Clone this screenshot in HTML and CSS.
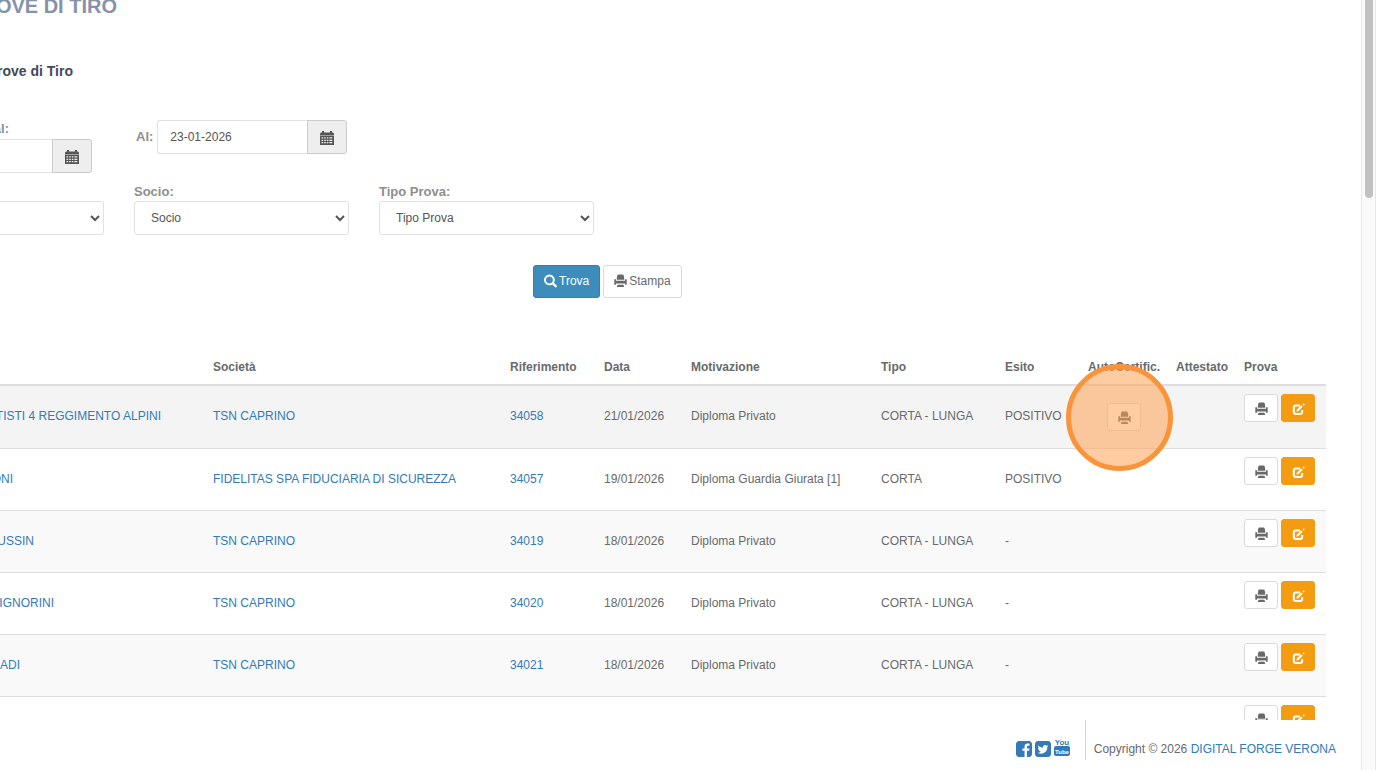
FILE: index.html
```html
<!DOCTYPE html>
<html lang="it">
<head>
<meta charset="utf-8">
<title>Prove di Tiro</title>
<link rel="stylesheet" href="styles.css">
</head>
<body>
<svg class="sprite" aria-hidden="true">
  <symbol id="i-print" viewBox="0 0 13 14"><path d="M4.500.5h4q1 0 1.200 1L10.200 4v1.800H2.800V4L3.300 1.500Q3.500.5 4.500.5zM.3 5.300h1.700v1.400h9V5.300h1.700v5.400H11V9.500H2v1.200H.3zM3.600 10.700h5.800l.8 2.300H2.800z"/></symbol>
  <symbol id="i-edit" viewBox="0 0 13 13"><path d="M8 3H4Q1.800 3 1.800 5.200v4q0 2.200 2.200 2.200h4q2.200 0 2.200-2.200V7.600" fill="none" stroke="currentColor" stroke-width="2"/><path d="M4.800 7.200L9.200 2.800l1.500 1.500L6.300 8.700 4.400 9.100zM10.600 1.800l1-1 1.200 1.200-1 1z"/></symbol>
  <symbol id="i-search" viewBox="0 0 1200 1200"><path transform="translate(0 1200) scale(1 -1)" d="M500 1191q100 0 191 -39t156.500 -104.500t104.500 -156.500t39 -191l-1 -2l1 -5q0 -141 -78 -262l275 -274q23 -26 22.500 -44.500t-22.500 -42.500l-59 -58q-26 -20 -46.500 -20t-39.500 20l-275 274q-119 -77 -261 -77l-5 1l-2 -1q-100 0 -191 39t-156.500 104.500t-104.500 156.500t-39 191t39 191t104.500 156.500t156.500 104.500t191 39zM500 1022q-88 0 -162 -43t-117 -117t-43 -162t43 -162t117 -117t162 -43t162 43t117 117t43 162t-43 162t-117 117t-162 43z"/></symbol>
  <symbol id="i-cal" viewBox="0 0 14 14"><path d="M0 3q0-1.500 1.500-1.500H2V0h2v1.500h6V0h2v1.500h.5Q14 1.500 14 3v1H0z"/><path fill-rule="evenodd" d="M0 4.600h14V14H0zM1.500 6.300v1.200h1.700V6.300zM4.200 6.300v1.200h1.600V6.300zM6.800 6.300v1.200h1.600V6.300zM9.400 6.300v1.200h2.900V6.300zM1.500 8.700v1.200h1.700V8.700zM4.200 8.700v1.200h1.600V8.700zM6.800 8.700v1.200h1.600V8.700zM9.400 8.700v1.200h2.900V8.700zM1.500 11v1.200h1.700V11zM4.200 11v1.200h1.600V11zM6.800 11v1.200h1.600V11zM9.400 11v1.200h2.900V11z"/></symbol>
</svg>

<div class="frame">
  <div class="page">
    <main class="content">
      <h1 class="title"><span>PROVE DI TIRO</span></h1>
      <h2 class="subtitle"><span>Prove di Tiro</span></h2>

      <form class="filters">
        <div class="dates">
          <div class="from">
            <label for="dal"><span>Dal:</span></label>
            <div class="group"><input id="dal" type="text"><button type="button" aria-label="Calendario dal"><svg><use href="#i-cal"/></svg></button></div>
          </div>
          <div class="to">
            <label for="al">Al:</label>
            <div class="group"><input id="al" type="text" value="23-01-2026"><button type="button" aria-label="Calendario al"><svg><use href="#i-cal"/></svg></button></div>
          </div>
        </div>
        <div class="selects">
          <div class="field first"><select aria-label="Filtro"><option></option></select></div>
          <div class="field"><label for="socio">Socio:</label><select id="socio"><option>Socio</option></select></div>
          <div class="field"><label for="tipo">Tipo Prova:</label><select id="tipo"><option>Tipo Prova</option></select></div>
        </div>
        <div class="actions">
          <button type="button" class="btn primary"><svg><use href="#i-search"/></svg>Trova</button>
          <button type="button" class="btn"><svg><use href="#i-print"/></svg>Stampa</button>
        </div>
      </form>

      <table class="grid">
        <colgroup><col class="c-name"><col><col class="c-ref"><col class="c-date"><col class="c-reason"><col class="c-type"><col class="c-result"><col class="c-auto"><col class="c-att"><col class="c-test"></colgroup>
        <thead><tr><th></th><th>Società</th><th>Riferimento</th><th>Data</th><th>Motivazione</th><th>Tipo</th><th>Esito</th><th>AutoCertific.</th><th>Attestato</th><th>Prova</th></tr></thead>
        <tbody>
          <tr class="hover"><td class="name"><a href="#" style="width:161px">TISTI 4 REGGIMENTO ALPINI</a></td><td><a href="#">TSN CAPRINO</a></td><td><a href="#">34058</a></td><td>21/01/2026</td><td>Diploma Privato</td><td>CORTA - LUNGA</td><td>POSITIVO</td><td class="auto"><span class="spot"><button type="button" class="icon-btn" aria-label="Stampa autocertificazione"><svg><use href="#i-print"/></svg></button></span></td><td></td><td class="tools"><button type="button" class="icon-btn" aria-label="Stampa"><svg><use href="#i-print"/></svg></button><button type="button" class="icon-btn edit" aria-label="Modifica"><svg><use href="#i-edit"/></svg></button></td></tr>
          <tr><td class="name"><a href="#" style="width:13px">ONI</a></td><td><a href="#">FIDELITAS SPA FIDUCIARIA DI SICUREZZA</a></td><td><a href="#">34057</a></td><td>19/01/2026</td><td>Diploma Guardia Giurata [1]</td><td>CORTA</td><td>POSITIVO</td><td></td><td></td><td class="tools"><button type="button" class="icon-btn" aria-label="Stampa"><svg><use href="#i-print"/></svg></button><button type="button" class="icon-btn edit" aria-label="Modifica"><svg><use href="#i-edit"/></svg></button></td></tr>
          <tr><td class="name"><a href="#" style="width:34px">USSIN</a></td><td><a href="#">TSN CAPRINO</a></td><td><a href="#">34019</a></td><td>18/01/2026</td><td>Diploma Privato</td><td>CORTA - LUNGA</td><td>-</td><td></td><td></td><td class="tools"><button type="button" class="icon-btn" aria-label="Stampa"><svg><use href="#i-print"/></svg></button><button type="button" class="icon-btn edit" aria-label="Modifica"><svg><use href="#i-edit"/></svg></button></td></tr>
          <tr><td class="name"><a href="#" style="width:54px">IGNORINI</a></td><td><a href="#">TSN CAPRINO</a></td><td><a href="#">34020</a></td><td>18/01/2026</td><td>Diploma Privato</td><td>CORTA - LUNGA</td><td>-</td><td></td><td></td><td class="tools"><button type="button" class="icon-btn" aria-label="Stampa"><svg><use href="#i-print"/></svg></button><button type="button" class="icon-btn edit" aria-label="Modifica"><svg><use href="#i-edit"/></svg></button></td></tr>
          <tr><td class="name"><a href="#" style="width:20px">ADI</a></td><td><a href="#">TSN CAPRINO</a></td><td><a href="#">34021</a></td><td>18/01/2026</td><td>Diploma Privato</td><td>CORTA - LUNGA</td><td>-</td><td></td><td></td><td class="tools"><button type="button" class="icon-btn" aria-label="Stampa"><svg><use href="#i-print"/></svg></button><button type="button" class="icon-btn edit" aria-label="Modifica"><svg><use href="#i-edit"/></svg></button></td></tr>
          <tr class="last"><td></td><td></td><td></td><td></td><td></td><td></td><td></td><td></td><td></td><td class="tools"><button type="button" class="icon-btn" aria-label="Stampa"><svg><use href="#i-print"/></svg></button><button type="button" class="icon-btn edit" aria-label="Modifica"><svg><use href="#i-edit"/></svg></button></td></tr>
        </tbody>
      </table>
    </main>
    <footer class="footer">
      <nav class="social">
        <a href="#" aria-label="Facebook"><svg viewBox="0 128 1536 1536"><path d="M1248 128q119 0 203.500 84.500t84.500 203.500v960q0 119-84.500 203.500t-203.500 84.500h-188v-595h199l30-232h-229v-148q0-56 23.500-84t91.500-28l122-1v-207q-63-9-178-9-136 0-217.500 80t-81.500 226v171h-200v232h200v595h-532q-119 0-203.500-84.500t-84.500-203.500v-960q0-119 84.500-203.500t203.500-84.500h960z"/></svg></a>
        <a href="#" aria-label="Twitter"><svg viewBox="128 128 1536 1536"><path d="M1408 610q-56 25-121 34 68-40 93-117-65 38-134 51-61-66-153-66-87 0-148.500 61.500t-61.500 148.500q0 29 5 48-129-7-242-65t-192-155q-29 50-29 106 0 114 91 175-47-1-100-26v2q0 75 50 133.500t123 72.500q-29 8-51 8-13 0-39-4 21 63 74.500 104t121.500 42q-116 90-261 90-26 0-50-3 148 94 322 94 112 0 210-35.500t168-95 120.500-137 75-162 24.500-168.500q0-18-1-27 63-45 105-109zm256-194v960q0 119-84.500 203.500t-203.500 84.500h-960q-119 0-203.500-84.500t-84.500-203.500v-960q0-119 84.500-203.500t203.500-84.500h960q119 0 203.500 84.500t84.500 203.500z"/></svg></a>
        <a href="#" aria-label="YouTube"><svg class="yt" viewBox="0 0 16 19"><text x="8" y="7" class="yt-you">You</text><rect x="0" y="8" width="16" height="10" rx="2"/><text x="8" y="16" class="yt-tube">Tube</text></svg></a>
      </nav>
      <p class="copy">Copyright © 2026 <a href="#">DIGITAL FORGE VERONA</a></p>
    </footer>
  </div>
  <div class="scrollbar" aria-hidden="true"><div class="thumb"></div></div>
</div>
</body>
</html>
```
FILE: styles.css
```css
*, *::after { box-sizing: border-box; }
body {
  margin: 0;
  font: 12px/17px "Liberation Sans", Arial, sans-serif;
  color: #676a6c;
  background: #fff;
  overflow: hidden;
}
.sprite { position: absolute; width: 0; height: 0; }
svg { fill: currentColor; display: block; }
a { color: #337ab7; text-decoration: none; }
input, select, button { font: inherit; color: inherit; }
.frame { display: flex; height: 100vh; }
.page { flex: 1; min-width: 0; display: flex; flex-direction: column; }
.content { flex: 1; min-height: 0; overflow: hidden; padding-right: 35px; }

.title, .subtitle { display: flex; justify-content: flex-end; margin: 0; overflow: hidden; white-space: nowrap; }
.title { width: 117px; height: 18px; align-items: flex-end; font-size: 20px; line-height: 24px; color: #8592a9; }
.subtitle { width: 73px; margin-top: 43px; font-size: 14px; line-height: 20px; color: #3f4a5a; }

label { font-size: 13px; line-height: 18px; font-weight: bold; color: #8e8e8e; }
.dates { display: flex; margin-top: 39px; }
.from { width: 92px; overflow: hidden; }
.from label { display: flex; justify-content: flex-end; width: 9px; height: 19px; white-space: nowrap; }
.to { display: flex; align-items: center; gap: 4px; height: 34px; margin-left: 44px; }
.group { display: flex; height: 34px; }
.group input { width: 150px; min-width: 0; border: 1px solid #e0e1e4; border-right: 0; border-radius: 3px 0 0 3px; padding: 0 12px; background: #fff; color: #555; }
.from input { width: 52px; border-left: 0; border-radius: 0; }
.group button { width: 40px; border: 1px solid #ccc; border-radius: 0 3px 3px 0; background: #eee; display: flex; align-items: center; justify-content: center; padding: 2px 0 0; color: #555; }
.group svg { width: 14px; height: 14px; }

.selects { display: flex; align-items: flex-end; gap: 30px; margin-top: 10px; }
.field { width: 215px; display: flex; flex-direction: column; }
.field.first { width: 104px; }
select { width: 100%; height: 34px; border: 1px solid #e0e1e4; border-radius: 3px; background: #fff; padding: 0 12px; color: #555; }
.field.first select { border-left: 0; border-radius: 0 3px 3px 0; }
.selects select { padding-right: 0; }
.actions { display: flex; gap: 3px; margin: 30px 0 0 533px; }
.btn { display: flex; align-items: center; gap: 2px; height: 33px; padding: 0 10px; border: 1px solid #d9dadc; border-radius: 3px; background: #fff; }
.btn svg { width: 13px; height: 14px; margin-bottom: 2px; }
.btn.primary { background: #3c8dbc; border-color: #367fa9; color: #fff; }

.grid { width: 100%; margin-top: 51px; table-layout: fixed; border-collapse: separate; border-spacing: 0; }
.c-name { width: 205px; }
.c-ref { width: 94px; }
.c-date { width: 87px; }
.c-reason { width: 190px; }
.c-type { width: 124px; }
.c-result { width: 83px; }
.c-auto { width: 88px; }
.c-att { width: 68px; }
.c-test { width: 90px; }
th { height: 37px; padding: 2px 8px 0; text-align: left; white-space: nowrap; border-bottom: 2px solid #ddd; }
td { height: 62px; padding: 0 8px; white-space: nowrap; border-bottom: 1px solid #ddd; }
tbody tr:nth-child(odd) { background: #f9f9f9; }
tbody tr.hover { background: #f4f4f4; }
tbody tr.hover td { height: 63px; }
tbody tr.hover td:not(.auto) { padding-bottom: 2px; }
tbody tr.last { background: #fff; }
td.name { padding: 0; }
.name a { display: flex; justify-content: flex-end; overflow: hidden; }
td.tools { padding-top: 8px; vertical-align: top; }
.icon-btn { display: inline-flex; align-items: center; justify-content: center; width: 34px; height: 28px; padding: 2px 0 0; border: 1px solid #d9dadc; border-radius: 3px; background: #fff; vertical-align: top; }
.icon-btn + .icon-btn { margin-left: 3px; }
.icon-btn svg { width: 13px; height: 14px; }
.icon-btn.edit { background: #f39c12; border-color: #f39c12; color: #fff; }
.spot { position: relative; display: flex; justify-content: center; }
.spot::after { content: ""; position: absolute; left: 50%; top: 50%; width: 107px; height: 107px; margin: -53px 0 0 -58px; border: 5px solid #f9943b; border-radius: 50%; background: rgba(255, 160, 82, 0.55); pointer-events: none; }
.footer { display: flex; justify-content: flex-end; height: 50px; padding-right: 25px; background: #fff; }
.social { display: flex; gap: 3px; align-items: flex-end; padding: 0 15px 13px 0; height: 50px; }
.social svg { width: 16px; height: 16px; }
.social .yt { height: 19px; }
.yt text { text-anchor: middle; font-weight: bold; font-size: 8px; }
.yt .yt-tube { fill: #fff; font-size: 6px; }
.copy { height: 40px; margin: 0; padding: 21px 0 0 8px; border-left: 1px solid #d2d6de; }
.scrollbar { width: 15px; background: #fafafa; border: solid #e8e8e8; border-width: 0 1px; padding: 0 2px 0 3px; }
.thumb { height: 198px; border-radius: 0 0 4px 4px; background: #c1c1c1; }
```
